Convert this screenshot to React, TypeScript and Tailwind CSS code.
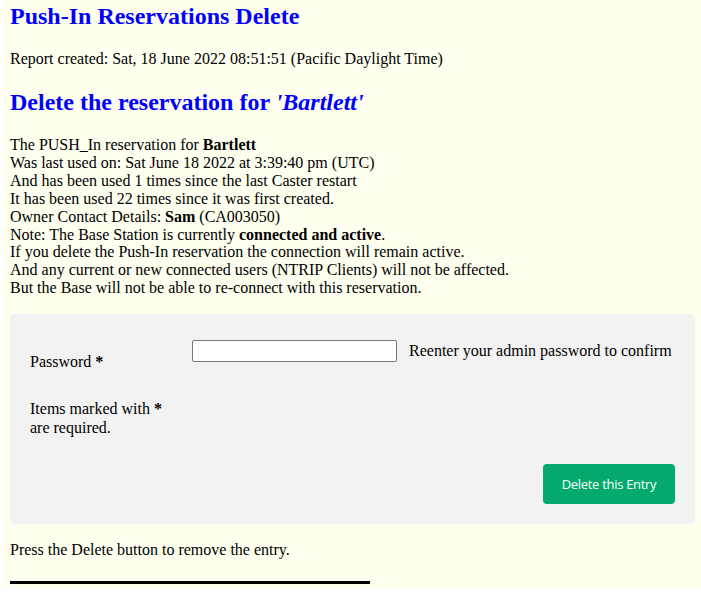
export default function App() {
    return (
        <div className="ml-[3px] w-[698px] bg-[#fffff0] pl-[7px] pr-[6px] pt-[2px] pb-[4px] text-black font-['Liberation_Serif',serif] text-[16px] leading-[18px]">
            {/* Title */}
            <h1 className="text-[24px] leading-[28px] font-bold text-[#0000ff]">Push-In Reservations Delete</h1>

            <p className="mt-[20px]">Report created: Sat, 18 June 2022 08:51:51 (Pacific Daylight Time)</p>

            <h2 className="mt-[20px] text-[24px] leading-[28px] font-bold text-[#0000ff]">
                Delete the reservation for <i>'Bartlett'</i>
            </h2>

            {/* Details */}
            <div className="mt-[20px] leading-[17.9px]">
                The PUSH_In reservation for <b>Bartlett</b>
                <br />
                Was last used on: Sat June 18 2022 at 3:39:40 pm (UTC)
                <br />
                And has been used 1 times since the last Caster restart
                <br />
                It has been used 22 times since it was first created.
                <br />
                Owner Contact Details: <b>Sam</b> (CA003050)
                <br />
                Note: The Base Station is currently <b>connected and active</b>.
                <br />
                If you delete the Push-In reservation the connection will remain active.
                <br />
                And any current or new connected users (NTRIP Clients) will not be affected.
                <br />
                But the Base will not be able to re-connect with this reservation.
            </div>

            {/* Form panel */}
            <form className="mt-[17px] rounded-[5px] bg-[#f2f2f2] pl-[20px] pr-[20px] pt-[26px] pb-[20px]">
                <div className="flex items-start">
                    <label className="w-[162px] pt-[13px]">
                        Password <b>*</b>
                    </label>
                    <input
                        type="password"
                        className="w-[205px] h-[22px] border border-[#767676] rounded-[2px] bg-white"
                    />
                    <span className="ml-[12px] pt-[2px]">Reenter your admin password to confirm</span>
                </div>
                <div className="mt-[28px] leading-[19px]">
                    Items marked with <b>*</b>
                    <br />
                    are required.
                </div>
                <div className="mt-[27px] flex justify-end">
                    <button
                        type="button"
                        className="w-[132px] h-[40px] rounded-[4px] bg-[#04aa6d] text-white text-[13px] tracking-[-0.3px] font-['Open_Sans',sans-serif]"
                    >
                        Delete this Entry
                    </button>
                </div>
            </form>

            <p className="mt-[17px]">Press the Delete button to remove the entry.</p>

            <div className="mt-[22px] w-[360px] h-[3px] bg-black" />
        </div>
    );
}
